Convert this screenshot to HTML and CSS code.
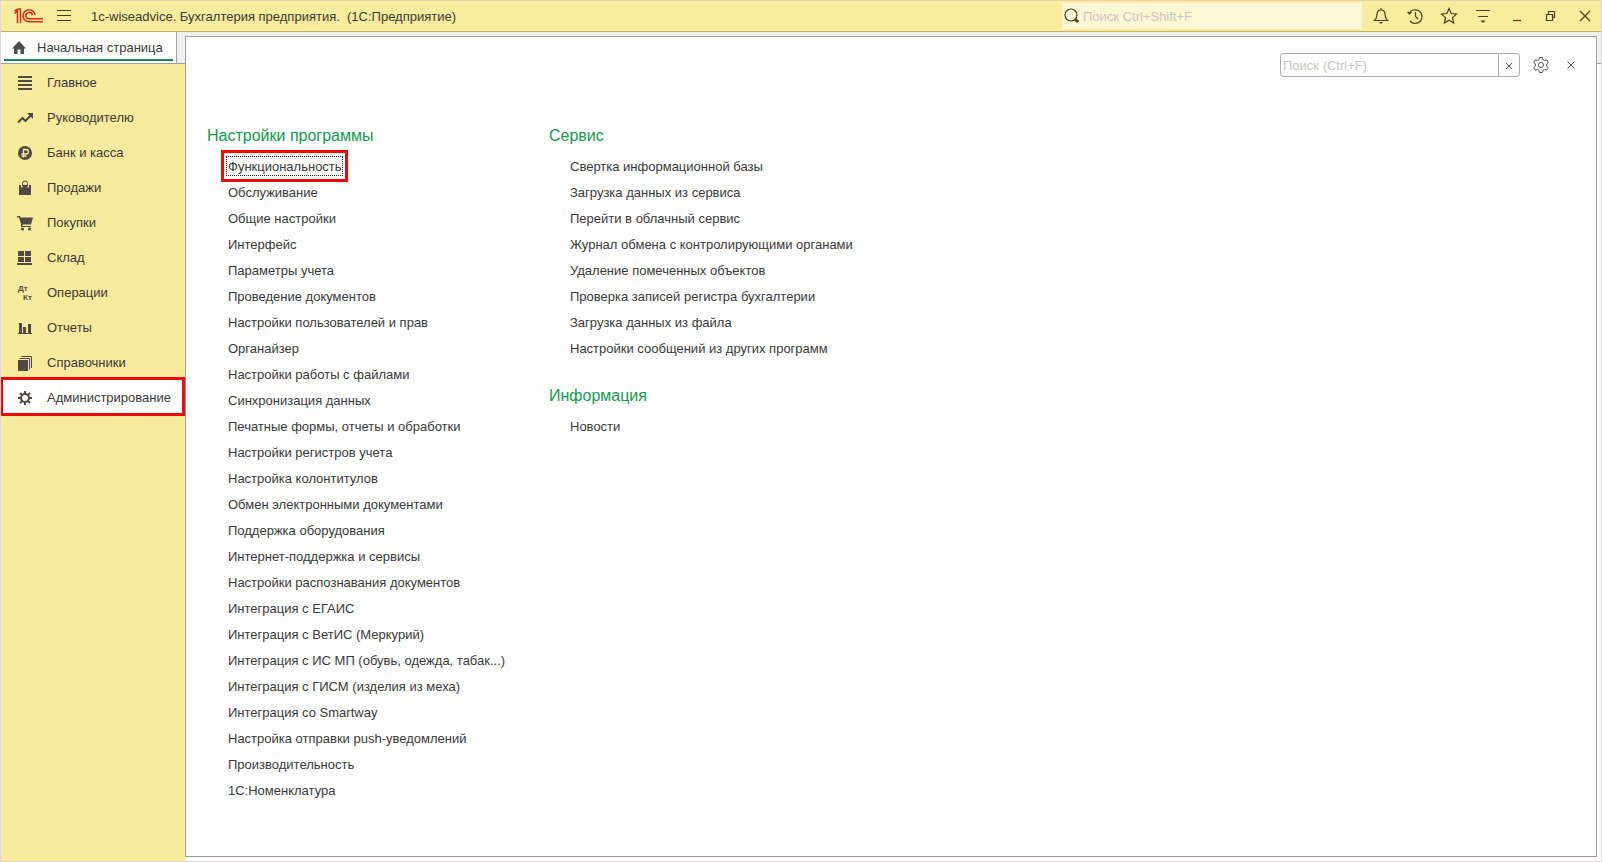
FILE: index.html
```
<!DOCTYPE html>
<html lang="ru">
<head>
    <meta charset="UTF-8">
    <meta name="viewport" content="width=device-width, initial-scale=1.0">
    <title>1С:Предприятие</title>
    <link rel="stylesheet" href="styles.css">
</head>
<body>

<header class="topbar">
    <svg class="logo" width="30" height="16" viewBox="0 0 30 16" aria-label="1С">
        <path d="M.5 5.500L3.500 3V15M.5 3L4 1H6.500V15" />
        <path d="M21 7A6 6 0 1 0 15 13.700H29M18.300 7A3.200 3.200 0 1 0 15 10.800H29" />
    </svg>
    <button class="icon-btn menu-btn" aria-label="Меню">
        <svg width="16" height="14" viewBox="0 0 16 14"><path d="M1 1.500h14M1 6.500h14M1 11.500h14" /></svg>
    </button>
    <h1 class="title">1c-wiseadvice. Бухгалтерия предприятия.&nbsp; (1С:Предприятие)</h1>
    <div class="top-search">
        <svg width="18" height="18" viewBox="0 0 18 18"><circle cx="8" cy="8" r="6" /><path class="handle" d="M12.500 12.500L15 15" /></svg>
        <input type="text" placeholder="Поиск Ctrl+Shift+F" aria-label="Поиск">
    </div>
    <div class="top-icons">
        <button class="icon-btn" aria-label="Уведомления">
            <svg width="18" height="18" viewBox="0 0 18 18"><path d="M2.500 13.500h13c-2-2-2.500-3-2.500-6C13 4.500 11.500 3 9 3S5 4.500 5 7.500c0 3-.5 4-2.500 6zM9 3V1" /><path class="solid" d="M7 15h4l-2 2z" /></svg>
        </button>
        <button class="icon-btn" aria-label="История">
            <svg width="18" height="18" viewBox="0 0 18 18"><path d="M3.200 6.500A6.800 6.800 0 1 1 4 14M9.500 5v4.500l2.500 2.500" /><path class="solid" d="M1 5h5L3.500 8z" /></svg>
        </button>
        <button class="icon-btn" aria-label="Избранное">
            <svg width="18" height="18" viewBox="0 0 18 18"><path d="M9 1.500l2.200 5 5.300.5-4 3.600 1.200 5.400L9 13.200 4.300 16l1.200-5.400-4-3.600 5.300-.5z" /></svg>
        </button>
        <button class="icon-btn" aria-label="Настройки">
            <svg width="18" height="18" viewBox="0 0 18 18"><path d="M2 3.500h14M4 9.500h10" /><path class="solid" d="M6.500 13.500h5L9 16z" /></svg>
        </button>
        <button class="icon-btn" aria-label="Свернуть">
            <svg width="18" height="18" viewBox="0 0 18 18"><path d="M5 13.500h8" /></svg>
        </button>
        <button class="icon-btn" aria-label="Развернуть">
            <svg width="18" height="18" viewBox="0 0 18 18"><path d="M4.500 7.500h6v6h-6zM6.500 7.500v-3h6v6h-2" /></svg>
        </button>
        <button class="icon-btn" aria-label="Закрыть">
            <svg width="18" height="18" viewBox="0 0 18 18"><path d="M4 4l10 10M14 4L4 14" /></svg>
        </button>
    </div>
</header>

<div class="workspace">
    <div class="left">
        <div class="tab-row">
            <a class="tab" href="#">
                <svg width="16" height="14" viewBox="0 0 16 14"><path d="M8 0l7 7.500h-2V13h-3.500V8.500h-3V13H3V7.500H1z" /></svg>
                Начальная страница
            </a>
        </div>
        <nav class="sidebar">
            <a href="#"><svg viewBox="0 0 16 16"><path d="M1 1h14v2H1zM1 5h14v2H1zM1 9h14v2H1zM1 13h14v2H1z" /></svg>Главное</a>
            <a href="#"><svg viewBox="0 0 16 16"><path class="line" d="M1 12.500l4.500-4.500 3 3L14 5" /><path d="M10 3h6v6z" /></svg>Руководителю</a>
            <a href="#"><svg viewBox="0 0 16 16"><circle cx="8" cy="8" r="7" /><path class="cut" d="M6.500 12.500v-8h2.700a2.100 2.100 0 0 1 0 4.500H4.500M4.500 11h5" /></svg>Банк и касса</a>
            <a href="#"><svg viewBox="0 0 16 16"><path d="M2 5h2v2.500h1.500V5h5v2.500H12V5h2v10H2z" /><path class="thin" d="M5.500 6V3.500a2.500 2.500 0 0 1 5 0V6" /></svg>Продажи</a>
            <a href="#"><svg viewBox="0 0 16 16"><path d="M0 1h3l.7 1.500H16L14 9.500H5.500V11H14v1H4V9L2 2.500H0z" /><circle cx="5.500" cy="14" r="1.500" /><circle cx="12.500" cy="14" r="1.500" /></svg>Покупки</a>
            <a href="#"><svg viewBox="0 0 16 16"><path d="M1 1h6v5H1zM8 1h6v5H8zM1 7h6v5H1zM8 7h6v5H8zM0 13h15v2H0z" /></svg>Склад</a>
            <a href="#"><svg viewBox="0 0 16 16"><text x="1" y="6">Дт</text><text x="6" y="15">Кт</text></svg>Операции</a>
            <a href="#"><svg viewBox="0 0 16 16"><path d="M1 13h14v1H1zM2 3h3v10H2zM6 7h3v6H6zM11 4h3v9h-3z" /></svg>Отчеты</a>
            <a href="#"><svg viewBox="0 0 16 16"><path d="M1 5h10v11H1z" /><path class="thin" d="M2.500 3.500H12.500V14.500M4.500 1.500H14.500V13" /></svg>Справочники</a>
            <a class="active" href="#"><svg viewBox="0 0 16 16"><circle class="line" cx="8" cy="8" r="4" /><path class="line" d="M8 1v3M8 12v3M1 8h3M12 8h3M3 3l2.200 2.200M10.800 10.800L13 13M13 3l-2.200 2.200M5.200 10.800L3 13" /></svg>Администрирование</a>
        </nav>
    </div>

    <main class="panel">
        <div class="panel-tools">
            <div class="panel-search">
                <input type="text" placeholder="Поиск (Ctrl+F)" aria-label="Поиск по разделу">
                <button aria-label="Очистить"><svg width="8" height="8" viewBox="0 0 8 8"><path d="M1 1l6 6M7 1L1 7" /></svg></button>
            </div>
            <button class="icon-btn gear" aria-label="Настройки">
                <svg width="18" height="18" viewBox="0 0 18 18"><circle cx="9" cy="9" r="2.500" /><path d="M7.500 1.500h3l.5 2.200 1.500.9 2.200-.8 1.600 2.700-1.700 1.500v2l1.700 1.500-1.600 2.700-2.200-.8-1.500.9-.5 2.200h-3L7 14.300l-1.500-.9-2.200.8-1.600-2.700L3.400 10V8L1.700 6.500l1.600-2.700 2.200.8L7 3.700z" /></svg>
            </button>
            <button class="icon-btn close" aria-label="Закрыть">
                <svg width="10" height="10" viewBox="0 0 10 10"><path d="M1.500 1.500l7 7M8.500 1.500l-7 7" /></svg>
            </button>
        </div>

        <div class="columns">
            <div class="column">
                <section>
                    <h2>Настройки программы</h2>
                    <ul>
                        <li><a class="marked" href="#"><span>Функциональность</span></a></li>
                        <li><a href="#">Обслуживание</a></li>
                        <li><a href="#">Общие настройки</a></li>
                        <li><a href="#">Интерфейс</a></li>
                        <li><a href="#">Параметры учета</a></li>
                        <li><a href="#">Проведение документов</a></li>
                        <li><a href="#">Настройки пользователей и прав</a></li>
                        <li><a href="#">Органайзер</a></li>
                        <li><a href="#">Настройки работы с файлами</a></li>
                        <li><a href="#">Синхронизация данных</a></li>
                        <li><a href="#">Печатные формы, отчеты и обработки</a></li>
                        <li><a href="#">Настройки регистров учета</a></li>
                        <li><a href="#">Настройка колонтитулов</a></li>
                        <li><a href="#">Обмен электронными документами</a></li>
                        <li><a href="#">Поддержка оборудования</a></li>
                        <li><a href="#">Интернет-поддержка и сервисы</a></li>
                        <li><a href="#">Настройки распознавания документов</a></li>
                        <li><a href="#">Интеграция с ЕГАИС</a></li>
                        <li><a href="#">Интеграция с ВетИС (Меркурий)</a></li>
                        <li><a href="#">Интеграция с ИС МП (обувь, одежда, табак...)</a></li>
                        <li><a href="#">Интеграция с ГИСМ (изделия из меха)</a></li>
                        <li><a href="#">Интеграция со Smartway</a></li>
                        <li><a href="#">Настройка отправки push-уведомлений</a></li>
                        <li><a href="#">Производительность</a></li>
                        <li><a href="#">1С:Номенклатура</a></li>
                    </ul>
                </section>
            </div>
            <div class="column">
                <section>
                    <h2>Сервис</h2>
                    <ul>
                        <li><a href="#">Свертка информационной базы</a></li>
                        <li><a href="#">Загрузка данных из сервиса</a></li>
                        <li><a href="#">Перейти в облачный сервис</a></li>
                        <li><a href="#">Журнал обмена с контролирующими органами</a></li>
                        <li><a href="#">Удаление помеченных объектов</a></li>
                        <li><a href="#">Проверка записей регистра бухгалтерии</a></li>
                        <li><a href="#">Загрузка данных из файла</a></li>
                        <li><a href="#">Настройки сообщений из других программ</a></li>
                    </ul>
                </section>
                <section>
                    <h2>Информация</h2>
                    <ul>
                        <li><a href="#">Новости</a></li>
                    </ul>
                </section>
            </div>
        </div>
    </main>
</div>

</body>
</html>
```
FILE: styles.css
```
*{
    box-sizing:border-box;
}
body{
    display:flex;
    flex-direction:column;
    min-height:100vh;
    margin:0;
    font-family:"Liberation Sans", Arial, sans-serif;
    font-size:13px;
    color:#3a3a3a;
    background-color:#fdfdfd;
    border:1px solid #dcd6d6;
    border-top-color:#e6d3b0;
}
a{
    color:inherit;
    text-decoration:none;
}
button{
    padding:0;
    border:none;
    background:none;
    cursor:pointer;
}
input{
    min-width:0;
    padding:0;
    border:none;
    outline:none;
    background:none;
    font:inherit;
}
input::placeholder{
    color:#c8c5c2;
    opacity:1;
}

/* top bar */
.topbar{
    display:flex;
    align-items:center;
    height:31px;
    background-color:#f9ec9c;
    border-bottom:1px solid #c2b465;
}
.topbar svg{
    display:block;
    fill:none;
    stroke:#4a4020;
    stroke-width:1.2;
}
.topbar .solid{
    fill:#4a4020;
    stroke:none;
}
.topbar .logo{
    margin-left:13px;
    stroke:#d9301a;
    stroke-width:1.6;
}
.icon-btn{
    display:flex;
    align-items:center;
    justify-content:center;
}
.menu-btn{
    width:40px;
    height:30px;
}
.title{
    flex:1;
    margin:0 0 0 7px;
    font-size:13px;
    font-weight:normal;
}
.top-search{
    display:flex;
    align-items:center;
    width:300px;
    height:26px;
    padding-left:1px;
    background-color:#fef7d5;
}
.top-search input{
    flex:1;
    margin-left:2px;
}
.top-search .handle{
    stroke-width:3;
}
.top-icons{
    display:flex;
    margin:0 -1px 0 2px;
}
.top-icons .icon-btn{
    width:34px;
    height:30px;
}

/* left part */
.workspace{
    flex:1;
    display:flex;
    background:linear-gradient(#f1f0f0 31px, #a0a0a0 31px, #a0a0a0 32px, #fdfdfd 32px);
}
.left{
    display:flex;
    flex-direction:column;
    width:184px;
}
.tab-row{
    height:32px;
    border-bottom:1px solid #a0a0a0;
}
.tab{
    display:flex;
    align-items:center;
    gap:10px;
    width:176px;
    height:31px;
    padding-left:10px;
    background:linear-gradient(#16895a, #16895a) 3px 27px / 169px 2px no-repeat #fff;
    border-right:1px solid #a0a0a0;
}
.tab svg{
    fill:#4d4d4d;
}
.sidebar{
    flex:1;
    padding-top:1px;
    background-color:#f9eb9d;
}
.sidebar a{
    display:flex;
    align-items:center;
    gap:14px;
    height:35px;
    padding-left:16px;
}
.sidebar svg{
    width:16px;
    height:16px;
    fill:#514a44;
}
.sidebar .line,
.sidebar .thin{
    fill:none;
    stroke:#514a44;
    stroke-width:2;
}
.sidebar .thin{
    stroke-width:1;
}
.sidebar .cut{
    fill:none;
    stroke:#f9eb9d;
    stroke-width:1.3;
}
.sidebar text{
    font-size:8px;
    font-weight:bold;
}
.sidebar .active{
    height:39px;
    margin:-3px 0 0 -1px;
    padding:2px 0 0 14px;
    background-color:#fff;
    border:3px solid #ee0a0a;
}

/* section panel */
.panel{
    flex:1;
    margin:4px 4px 4px 0;
    background-color:#fefefe;
    border:1px solid #a0a0a0;
}
.panel-tools{
    display:flex;
    justify-content:flex-end;
    align-items:center;
    padding:16px 15px 0 0;
}
.panel-tools svg{
    fill:none;
    stroke:#555;
}
.panel-search{
    display:flex;
    width:240px;
    height:24px;
    border:1px solid #b0b0b0;
    border-radius:3px;
}
.panel-search input{
    flex:1;
    padding-left:2px;
}
.panel-search button{
    width:21px;
    border-left:1px solid #b0b0b0;
}
.gear{
    width:41px;
    height:24px;
}
.close{
    width:20px;
    height:24px;
}
.columns{
    display:flex;
    padding:47px 21px 0;
}
.column{
    width:342px;
}
h2{
    margin:0 0 6px;
    font-size:16px;
    font-weight:normal;
    line-height:24px;
    color:#149a52;
}
section + section{
    margin-top:22px;
}
ul{
    margin:0;
    padding:0 0 0 21px;
    list-style:none;
}
li{
    height:26px;
    line-height:26px;
    white-space:nowrap;
}
.marked{
    display:inline-block;
    margin:-4px 0 0 -7px;
    padding:3px 2px;
    border:3px solid #ee0a0a;
    line-height:17px;
}
.marked span{
    display:block;
    padding-top:1px;
    border:1px dotted #222;
    padding-left:1px;
}
```
